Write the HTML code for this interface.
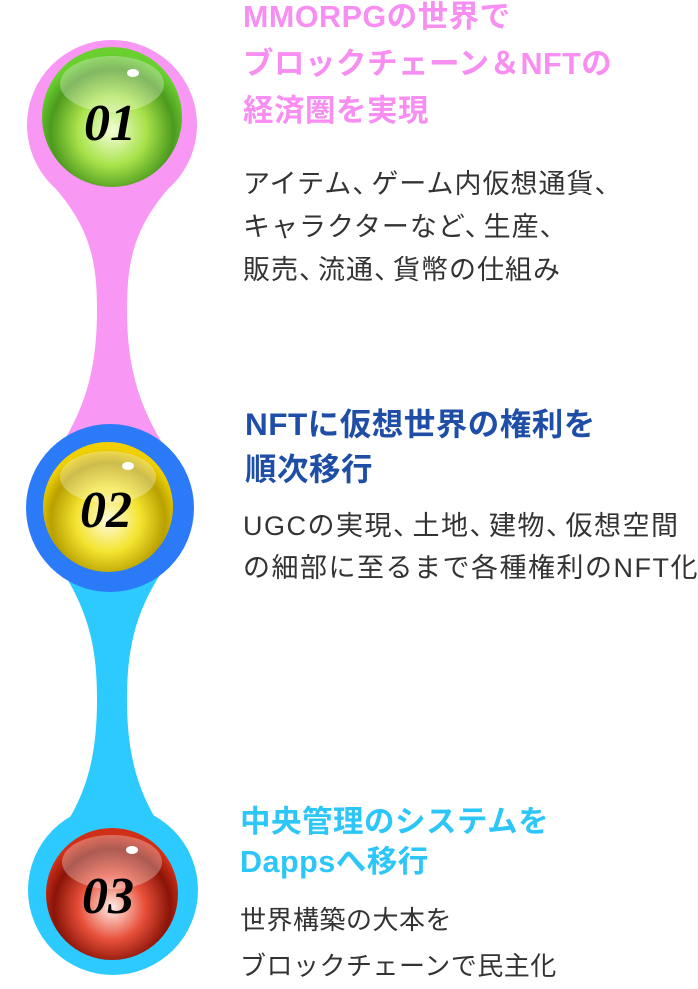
<!DOCTYPE html>
<html><head><meta charset="utf-8"><style>
body{margin:0;width:698px;height:987px;background:#fff;position:relative;overflow:hidden;font-family:"Liberation Sans","Noto Sans CJK JP",sans-serif}
.t{position:absolute;left:243px;font-weight:bold;font-size:29px;line-height:47px;letter-spacing:0.5px;white-space:nowrap}
.b{position:absolute;left:243px;font-size:27px;letter-spacing:1px;line-height:43px;color:#333;white-space:nowrap}
.p{margin-right:-9px}
</style></head><body>
<svg width="698" height="987" style="position:absolute;left:0;top:0">
<defs>
<radialGradient id="g1" cx="50%" cy="60%" r="55%"><stop offset="0" stop-color="#f4ffd8"/><stop offset=".45" stop-color="#a8e24a"/><stop offset=".8" stop-color="#4c9a1e"/><stop offset="1" stop-color="#6ad030"/></radialGradient>
<radialGradient id="g2" cx="50%" cy="60%" r="55%"><stop offset="0" stop-color="#fffbe0"/><stop offset=".45" stop-color="#f4e430"/><stop offset=".8" stop-color="#b8a000"/><stop offset="1" stop-color="#f0d000"/></radialGradient>
<radialGradient id="g3" cx="50%" cy="60%" r="55%"><stop offset="0" stop-color="#ffeee8"/><stop offset=".45" stop-color="#e8503a"/><stop offset=".8" stop-color="#8a1408"/><stop offset="1" stop-color="#d03018"/></radialGradient>
</defs>
<circle cx="112" cy="125" r="85" fill="#f897f4"/>
<path d="M48,180 C90,225 97,260 97,310 C97,370 85,410 55,455 L170,455 C140,410 127,370 127,310 C127,260 134,225 176,180 Z" fill="#f897f4"/>
<path d="M55,560 C90,610 97,650 97,700 C97,760 85,800 55,840 L170,840 C140,800 127,760 127,700 C127,650 134,610 170,560 Z" fill="#2ccaff"/>
<circle cx="113" cy="890" r="85" fill="#2ccaff"/>
<circle cx="110" cy="508" r="84" fill="#2b7af8"/>
<circle cx="112" cy="117" r="70" fill="url(#g1)"/>
<ellipse cx="112" cy="84" rx="52" ry="28" fill="#fff" opacity=".3"/>
<ellipse cx="133" cy="73" rx="6" ry="4" fill="#fff"/>
<circle cx="108" cy="507" r="65" fill="url(#g2)"/>
<ellipse cx="108" cy="477" rx="48" ry="26" fill="#fff" opacity=".3"/>
<ellipse cx="128" cy="466" rx="6" ry="4" fill="#fff"/>
<circle cx="112" cy="894" r="66" fill="url(#g3)"/>
<ellipse cx="112" cy="862" rx="50" ry="27" fill="#fff" opacity=".3"/>
<ellipse cx="132" cy="850" rx="6" ry="4" fill="#fff"/>
<g font-family="Liberation Serif,serif" font-style="italic" font-weight="bold" font-size="52" text-anchor="middle" fill="#000">
<text x="110" y="140">01</text><text x="106" y="527">02</text><text x="108" y="913">03</text></g>
</svg>
<div class="t" style="top:-6px;color:#f88ef2;font-size:30.5px">MMORPGの世界で<br>ブロックチェーン＆NFTの<br>経済圏を実現</div>
<div class="b" style="top:163px">アイテム<span class="p">、</span>ゲーム内仮想通貨<span class="p">、</span><br>キャラクターなど<span class="p">、</span>生産<span class="p">、</span><br>販売<span class="p">、</span>流通<span class="p">、</span>貨幣の仕組み</div>
<div class="t" style="top:402px;left:245px;color:#1f4ea6;line-height:45px;font-size:31.5px">NFTに仮想世界の権利を<br>順次移行</div>
<div class="b" style="top:505px;font-size:27px;letter-spacing:1.5px;line-height:42px">UGCの実現<span class="p">、</span>土地<span class="p">、</span>建物<span class="p">、</span>仮想空間<br>の細部に至るまで各種権利のNFT化</div>
<div class="t" style="top:802px;left:240px;color:#2cc6f8;line-height:40px;font-size:30.5px">中央管理のシステムを<br>Dappsへ移行</div>
<div class="b" style="top:897px;left:240px;line-height:46px;font-size:26px;letter-spacing:0.5px">世界構築の大本を<br>ブロックチェーンで民主化</div>
</body></html>
